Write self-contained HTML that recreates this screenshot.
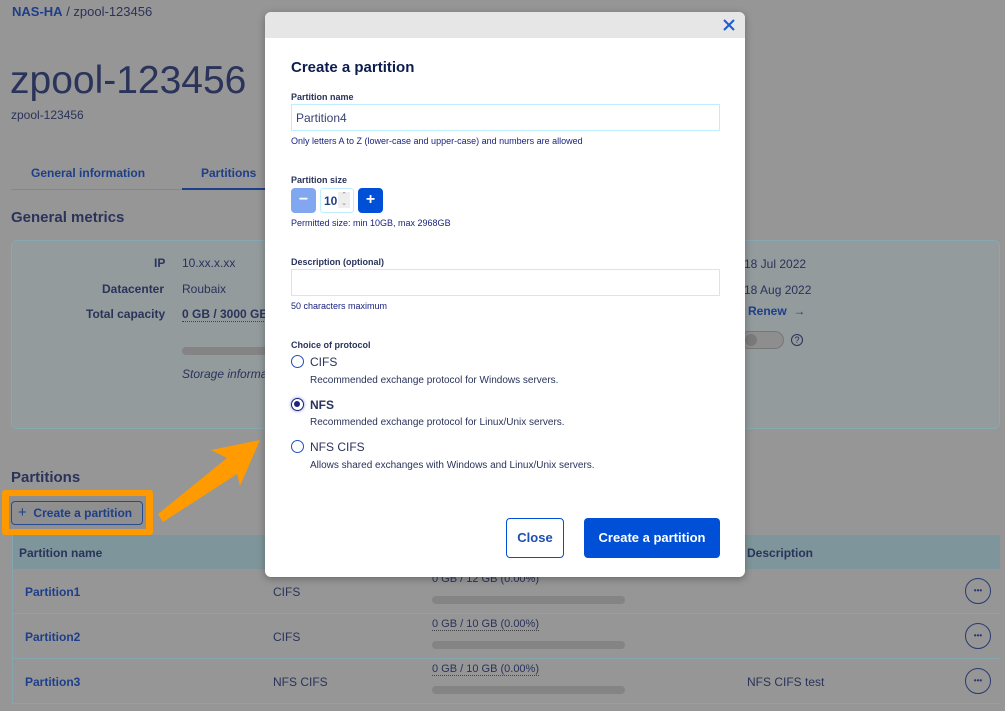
<!DOCTYPE html>
<html><head><meta charset="utf-8"><style>
*{margin:0;padding:0;box-sizing:border-box}
html{background:#969696}
body{width:1005px;height:711px;overflow:hidden;background:#969696;font-family:"Liberation Sans",sans-serif;color:#1c2a4d;position:relative}
.a{position:absolute;white-space:nowrap}
.b{font-weight:bold}
.lk{color:#1d3f8a}
.dk{color:#2a335a}
.bar{position:absolute;height:8px;border-radius:4px;background:#848484}
.row{position:absolute;left:12px;width:988px;border-bottom:1px solid #85a6ad}
.dots{position:absolute;width:26px;height:26px;border:1.5px solid #2a3a70;border-radius:50%;font-size:8px;font-weight:bold;text-align:center;line-height:23px;color:#2a3a70}
.m{color:#1a237e}
.radio{position:absolute;width:13px;height:13px;border:1.5px solid #2150b8;border-radius:50%;background:#fff}
</style></head><body>
<div class="a" style="left:12px;top:4px;font-size:13px"><span class="b lk">NAS-HA</span> <span class="dk">/ zpool-123456</span></div>
<div class="a dk" style="left:10px;top:59px;font-size:39px">zpool-123456</div>
<div class="a dk" style="left:11px;top:108px;font-size:12px">zpool-123456</div>
<div class="a b lk" style="left:31px;top:166px;font-size:12px">General information</div>
<div class="a b lk" style="left:201px;top:166px;font-size:12px">Partitions</div>
<div class="a" style="left:11px;top:189px;width:260px;border-top:1px solid #7f8a90"></div>
<div class="a" style="left:182px;top:188px;width:90px;border-top:2px solid #1d3f8a"></div>
<div class="a b dk" style="left:11px;top:209px;font-size:15px">General metrics</div>
<div class="a" style="left:11px;top:240px;width:989px;height:189px;border:1px solid #86a9b2;border-radius:6px;background:#939b9d"></div>
<div class="a b dk" style="left:154px;top:256px;font-size:12px">IP</div>
<div class="a dk" style="left:182px;top:256px;font-size:12px">10.xx.x.xx</div>
<div class="a b dk" style="left:102px;top:282px;font-size:12px">Datacenter</div>
<div class="a dk" style="left:182px;top:282px;font-size:12px">Roubaix</div>
<div class="a b dk" style="left:86px;top:307px;font-size:12px">Total capacity</div>
<div class="a b dk" style="left:182px;top:307px;font-size:12px;border-bottom:1px dotted #444">0 GB / 3000 GB</div>
<div class="bar" style="left:182px;top:347px;width:90px"></div>
<div class="a dk" style="left:182px;top:367px;font-size:12px;font-style:italic">Storage informa</div>
<div class="a dk" style="left:744px;top:257px;font-size:12px">18 Jul 2022</div>
<div class="a dk" style="left:744px;top:283px;font-size:12px">18 Aug 2022</div>
<div class="a b lk" style="left:748px;top:304px;font-size:12px">Renew &nbsp;→</div>
<div class="a" style="left:740px;top:331px;width:44px;height:18px;border:1px solid #777;border-radius:9px;background:#8e8e8e"></div>
<div class="a" style="left:745px;top:334px;width:12px;height:12px;border-radius:50%;background:#7a7a7a"></div>
<div class="a" style="left:791px;top:334px;width:12px;height:12px;border:1.3px solid #2a335a;border-radius:50%;font-size:9px;text-align:center;line-height:10px">?</div>

<div class="a b dk" style="left:11px;top:469px;font-size:15px">Partitions</div>
<div class="a" style="left:2px;top:490px;width:151px;height:45px;background:#ff9900;border-radius:3px"></div>
<div class="a" style="left:9px;top:496px;width:137px;height:33px;background:#8f8f8f"></div>
<div class="a b lk" style="left:11px;top:501px;width:132px;height:24px;border:1px solid #2a4a90;border-radius:4px;font-size:12px;line-height:22px;padding-left:6px"><span style="font-weight:normal;font-size:15px">+</span>&nbsp; Create a partition</div>
<svg class="a" style="left:155px;top:436px" width="110" height="90"><polygon points="3,78 8,86 82,38 85,50 105,4 56,14 72,22" fill="#ff9a00"/></svg>

<div class="a" style="left:12px;top:535px;width:988px;height:34px;background:#7e969b"></div>
<div class="a b dk" style="left:19px;top:546px;font-size:12px">Partition name</div>
<div class="a b dk" style="left:747px;top:546px;font-size:12px">Description</div>
<div class="row" style="top:569px;height:45px"></div>
<div class="row" style="top:614px;height:45px"></div>
<div class="row" style="top:659px;height:45px"></div>
<div class="a" style="left:12px;top:535px;height:169px;border-left:1px solid #85a6ad"></div>
<div class="a b lk" style="left:25px;top:585px;font-size:12px">Partition1</div>
<div class="a b lk" style="left:25px;top:630px;font-size:12px">Partition2</div>
<div class="a b lk" style="left:25px;top:675px;font-size:12px">Partition3</div>
<div class="a dk" style="left:273px;top:585px;font-size:12px">CIFS</div>
<div class="a dk" style="left:273px;top:630px;font-size:12px">CIFS</div>
<div class="a dk" style="left:273px;top:675px;font-size:12px">NFS CIFS</div>
<div class="a dk" style="left:432px;top:573px;font-size:11px">0 GB / 12 GB (0.00%)</div>
<div class="a dk" style="left:432px;top:618px;font-size:11px;border-bottom:1px dotted #444">0 GB / 10 GB (0.00%)</div>
<div class="a dk" style="left:432px;top:663px;font-size:11px;border-bottom:1px dotted #444">0 GB / 10 GB (0.00%)</div>
<div class="bar" style="left:432px;top:596px;width:193px"></div>
<div class="bar" style="left:432px;top:641px;width:193px"></div>
<div class="bar" style="left:432px;top:686px;width:193px"></div>
<div class="a dk" style="left:747px;top:675px;font-size:12px">NFS CIFS test</div>
<div class="dots" style="left:965px;top:578px">•••</div>
<div class="dots" style="left:965px;top:623px">•••</div>
<div class="dots" style="left:965px;top:668px">•••</div>

<div class="a" style="left:265px;top:12px;width:480px;height:565px;background:#fff;border-radius:6px;box-shadow:0 2px 8px rgba(0,0,0,.3);overflow:hidden">
 <div style="height:26px;background:#e6e6e6"></div>
 <svg class="a" style="left:458px;top:7px" width="12" height="12"><path d="M1 1L11 11M11 1L1 11" stroke="#1d5bd6" stroke-width="2"/></svg>
 <div class="a b" style="left:26px;top:47px;font-size:15px;color:#0d1c4f">Create a partition</div>
 <div class="a b dk" style="left:26px;top:80px;font-size:9px">Partition name</div>
 <div class="a" style="left:26px;top:92px;width:429px;height:27px;border:1px solid #bfefff"></div>
 <div class="a dk" style="left:31px;top:99px;font-size:12px;color:#3a4270">Partition4</div>
 <div class="a m" style="left:26px;top:124px;font-size:9px">Only letters A to Z (lower-case and upper-case) and numbers are allowed</div>
 <div class="a b dk" style="left:26px;top:163px;font-size:9px">Partition size</div>
 <div class="a" style="left:26px;top:176px;width:25px;height:25px;background:#80a7ef;border-radius:4px;color:#fff;text-align:center;font-weight:bold;line-height:24px">−</div>
 <div class="a" style="left:55px;top:176px;width:34px;height:25px;border:1px solid #bfefff;border-radius:3px"></div>
 <div class="a b" style="left:59px;top:182px;font-size:12px;color:#1d3f8a">10</div>
 <div class="a" style="left:73px;top:180px;width:12px;height:16px;background:#eee;font-size:7px;color:#888;text-align:center;line-height:8px">⌃<br>⌄</div>
 <div class="a" style="left:93px;top:176px;width:25px;height:25px;background:#0050d7;border-radius:4px;color:#fff;text-align:center;font-weight:bold;font-size:16px;line-height:24px">+</div>
 <div class="a m" style="left:26px;top:206px;font-size:9px">Permitted size: min 10GB, max 2968GB</div>
 <div class="a b dk" style="left:26px;top:245px;font-size:9px">Description (optional)</div>
 <div class="a" style="left:26px;top:257px;width:429px;height:27px;border:1px solid #bfefff"></div>
 <div class="a m" style="left:26px;top:289px;font-size:9px">50 characters maximum</div>
 <div class="a b dk" style="left:26px;top:328px;font-size:9px">Choice of protocol</div>
 <div class="radio" style="left:26px;top:343px"></div>
 <div class="a dk" style="left:45px;top:343px;font-size:12px">CIFS</div>
 <div class="a dk" style="left:45px;top:363px;font-size:10px">Recommended exchange protocol for Windows servers.</div>
 <div class="radio" style="left:26px;top:386px;border-color:#1a237e;box-shadow:0 0 3px #7b8cd6"><div style="width:6px;height:6px;margin:2px;border-radius:50%;background:#1a237e"></div></div>
 <div class="a b dk" style="left:45px;top:386px;font-size:12px">NFS</div>
 <div class="a dk" style="left:45px;top:405px;font-size:10px">Recommended exchange protocol for Linux/Unix servers.</div>
 <div class="radio" style="left:26px;top:428px"></div>
 <div class="a dk" style="left:45px;top:428px;font-size:12px">NFS CIFS</div>
 <div class="a dk" style="left:45px;top:448px;font-size:10px">Allows shared exchanges with Windows and Linux/Unix servers.</div>
 <div class="a b" style="left:241px;top:506px;width:58px;height:40px;border:1px solid #0050d7;border-radius:4px;color:#1d4fb0;font-size:13px;text-align:center;line-height:38px">Close</div>
 <div class="a b" style="left:319px;top:506px;width:136px;height:40px;background:#0050d7;border-radius:4px;color:#fff;font-size:13px;text-align:center;line-height:40px">Create a partition</div>
</div>
</body></html>
